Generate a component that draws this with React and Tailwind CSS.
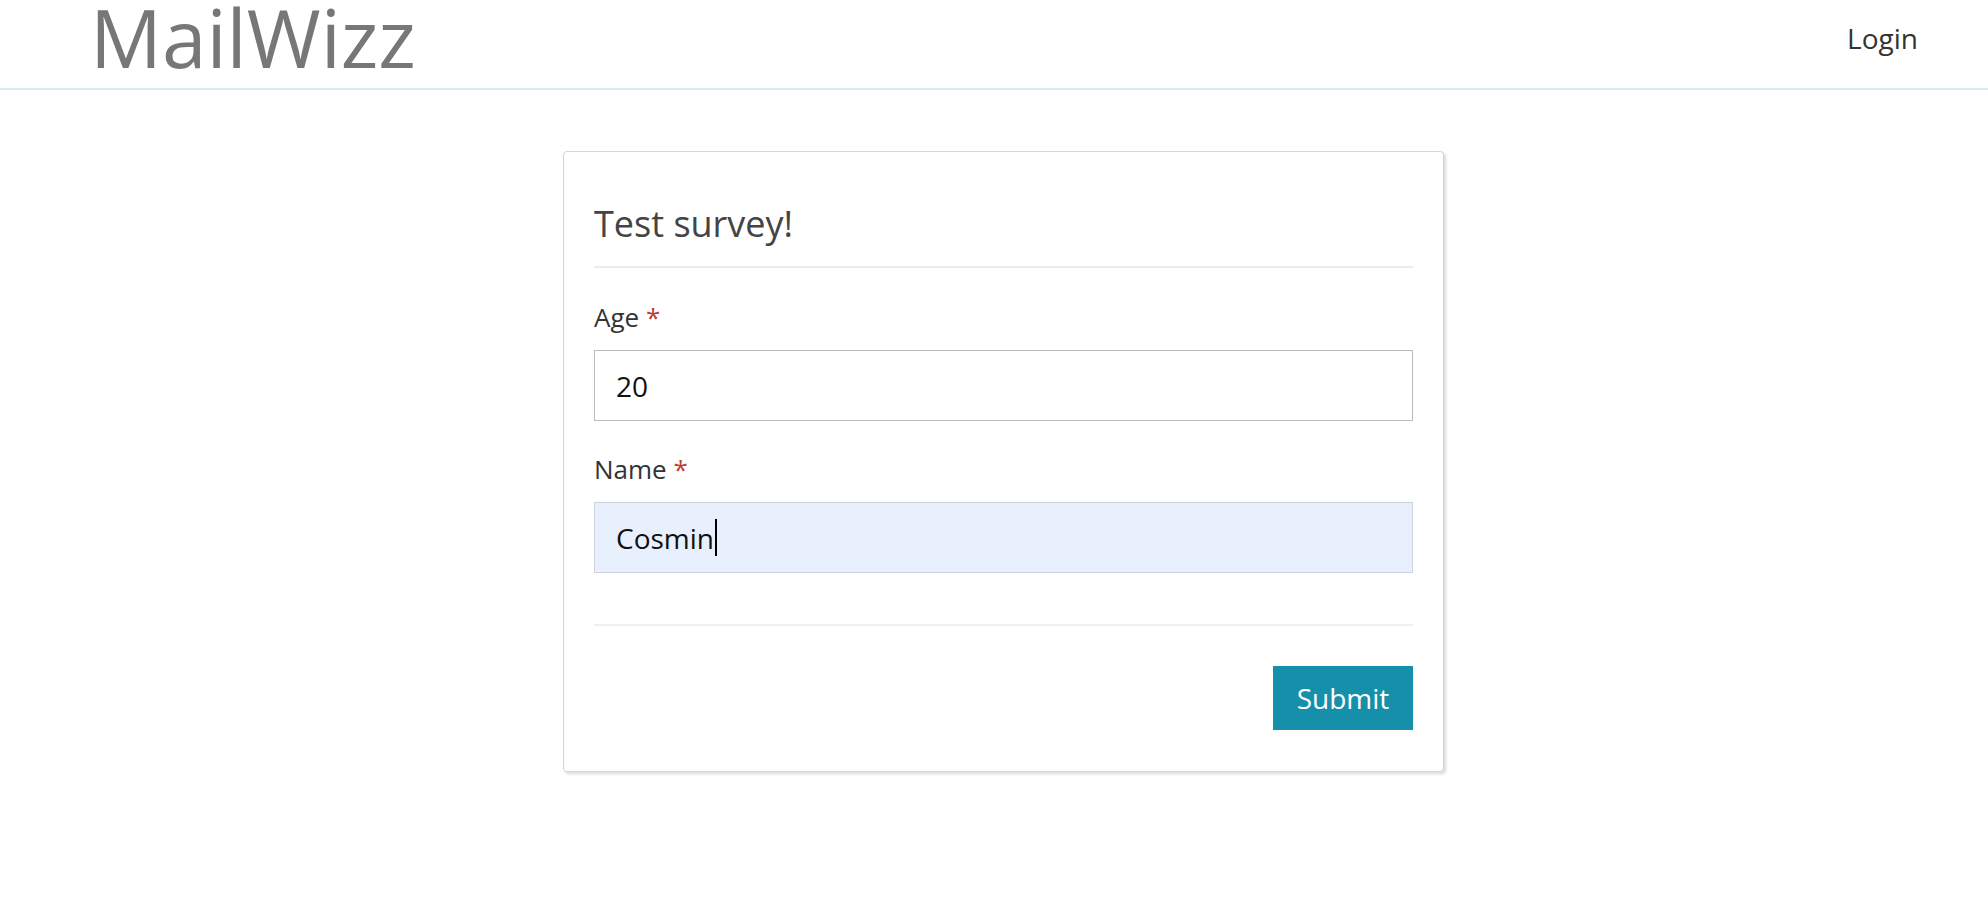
import React from "react";

function Field({ label, value, autofill, caret }) {
  return (
    <div className="flex flex-col">
      <div className="text-[26px] leading-normal text-[#333]">
        {label} <span className="text-[#c23b32]">*</span>
      </div>
      <div
        className={
          "mt-[13px] h-[71px] border flex items-center pl-[21px] text-[28px] leading-normal text-[#111] " +
          (autofill ? "bg-[#e8f0fe] border-[#cdd3dc]" : "bg-white border-[#bcbcbc]")
        }
      >
        <span>{value}</span>
        {caret ? <span className="ml-[1px] w-[2px] h-[37px] bg-black" /> : null}
      </div>
    </div>
  );
}

export default function App() {
  return (
    <div
      className="min-h-[910px] bg-white"
      style={{ fontFamily: '"Open Sans", "Liberation Sans", sans-serif' }}
    >
      <header className="h-[90px] border-b-2 border-[#dde9f1] flex items-start justify-between pl-[90px] pr-[70px]">
        <div className="text-[80px] leading-[74px] text-[#777]">MailWizz</div>
        <div className="pt-[17px] text-[28px] leading-normal text-[#333]">Login</div>
      </header>

      <main className="pt-[61px] pl-[563px]">
        <div className="w-[881px] bg-white border border-[#d2d6de] rounded-[4px] shadow-[2px_2px_3px_rgba(0,0,0,0.15)] px-[30px] pt-[45px] pb-[41px]">
          <h1 className="text-[36px] leading-normal text-[#444] font-normal">Test survey!</h1>
          <div className="mt-[15px] h-[2px] bg-[#ececec]" />
          <div className="mt-[30px] flex flex-col gap-[29px]">
            <Field label="Age" value="20" />
            <Field label="Name" value="Cosmin" autofill caret />
          </div>
          <div className="mt-[51px] h-[2px] bg-[#f0f0f0]" />
          <div className="mt-[40px] flex justify-end">
            <button className="w-[140px] h-[64px] bg-[#1690aa] text-white text-[28px] leading-normal flex items-center justify-center">
              Submit
            </button>
          </div>
        </div>
      </main>
    </div>
  );
}
